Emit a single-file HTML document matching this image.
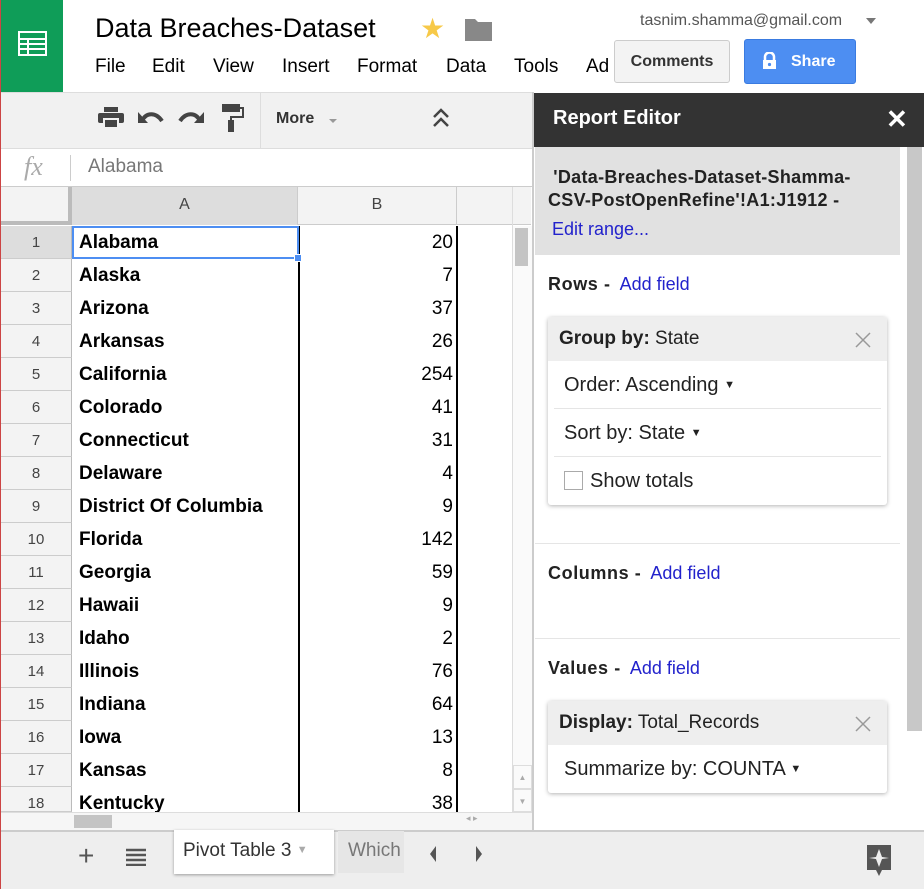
<!DOCTYPE html>
<html><head><style>
*{margin:0;padding:0;box-sizing:border-box}
body{width:924px;height:889px;position:relative;overflow:hidden;background:#fff;font-family:"Liberation Sans",Arial,sans-serif;color:#222}
.a{position:absolute}
.m{position:absolute;top:56px;font-size:19px;color:#000}
.rh{position:absolute;left:1px;width:71px;height:33px;background:#f3f3f3;border-bottom:1px solid #ccc;border-right:1px solid #bbb;text-align:center;font-size:15px;color:#444;line-height:33px}
.ca{position:absolute;left:79px;font-weight:bold;font-size:19px;line-height:33px;color:#000}
.cb{position:absolute;left:300px;width:153px;text-align:right;font-size:19px;line-height:33px;color:#000}
.lnk{color:#2222cc;font-weight:normal;margin-left:9px;letter-spacing:0}
.sec{position:absolute;left:548px;font-weight:bold;font-size:18px;letter-spacing:0.6px}
.card{position:absolute;left:548px;width:339px;background:#fff;border-radius:3px;box-shadow:0 1px 4px rgba(0,0,0,.3)}
.ch{background:#eee;height:44px;padding-left:11px;font-size:19px;line-height:44px;position:relative;border-radius:3px 3px 0 0}
.ch svg{position:absolute;right:16px;top:15px}
.ci{margin:0 6px;border-bottom:1px solid #e5e5e5;height:48px;line-height:48px;font-size:20px;padding-left:10px}
</style></head><body>
<div class="a" style="left:0;top:0;width:1px;height:889px;background:#c44"></div>
<div class="a" style="left:1px;top:0;width:62px;height:92px;background:#0f9d58"></div>
<svg class="a" style="left:18px;top:31px" width="29" height="25" viewBox="0 0 29 25"><rect x="1" y="1" width="27" height="23" fill="none" stroke="#fff" stroke-width="2"/><path d="M1 8H28M1 13H28M1 18H28M10 8V24" stroke="#fff" stroke-width="2"/></svg>
<div class="a" style="left:95px;top:13px;font-size:27px;color:#000">Data Breaches-Dataset</div>
<div class="a" style="left:420px;top:12px;font-size:28px;color:#f7c948">★</div>
<svg class="a" style="left:465px;top:17px" width="27" height="24"><path d="M0 2h10l3 3h14v19H0z" fill="#888"/></svg>
<div class="m" style="left:95px">File</div><div class="m" style="left:152px">Edit</div><div class="m" style="left:213px">View</div><div class="m" style="left:282px">Insert</div><div class="m" style="left:357px">Format</div><div class="m" style="left:446px">Data</div><div class="m" style="left:514px">Tools</div><div class="m" style="left:586px">Ad</div>
<div class="a" style="left:640px;top:12px;font-size:16px;color:#555">tasnim.shamma@gmail.com</div>
<div class="a" style="left:866px;top:18px;width:0;height:0;border:5px solid transparent;border-top:6px solid #777"></div>
<div class="a" style="left:614px;top:40px;width:116px;height:43px;background:#f3f3f3;border:1px solid #ccc;border-radius:3px;font-weight:bold;font-size:16px;line-height:41px;text-align:center;color:#333">Comments</div>
<div class="a" style="left:744px;top:39px;width:112px;height:45px;background:#4d8ef2;border:1px solid #3a7be0;border-radius:3px;color:#fff;font-weight:bold;font-size:16px;line-height:43px;padding-left:46px">Share</div>
<svg class="a" style="left:762px;top:52px" width="15" height="17"><path d="M3 8V5a4.5 4.5 0 019 0v3" fill="none" stroke="#fff" stroke-width="2.5"/><rect x="1" y="8" width="13" height="9" fill="#fff"/><circle cx="7.5" cy="12.5" r="1.6" fill="#4d8ef2"/></svg>
<div class="a" style="left:1px;top:92px;width:532px;height:57px;background:#f1f1f1;border-top:1px solid #ddd;border-bottom:1px solid #ddd"></div>
<div class="a" style="left:260px;top:93px;width:1px;height:55px;background:#ddd"></div>
<svg class="a" style="left:98px;top:107px" width="26" height="22"><rect x="6" y="0" width="14" height="5" fill="#444"/><rect x="0" y="6" width="26" height="10" rx="2" fill="#444"/><rect x="6" y="12" width="14" height="9" fill="#444" stroke="#f1f1f1" stroke-width="2"/></svg>
<svg class="a" style="left:138px;top:109px" width="26" height="16"><path d="M4 12C8 3 18 3 24 12" fill="none" stroke="#444" stroke-width="4"/><path d="M0 3v11h10z" fill="#444"/></svg>
<svg class="a" style="left:178px;top:109px" width="26" height="16"><path d="M22 12C18 3 8 3 2 12" fill="none" stroke="#444" stroke-width="4"/><path d="M26 3v11H16z" fill="#444"/></svg>
<svg class="a" style="left:220px;top:104px" width="26" height="28"><rect x="2" y="0" width="18" height="8" fill="#444"/><path d="M20 4h3v9H11v4" fill="none" stroke="#444" stroke-width="2"/><rect x="8" y="16" width="6" height="12" fill="#444"/></svg>
<div class="a" style="left:276px;top:110px;font-weight:bold;font-size:16px;color:#333">More</div>
<div class="a" style="left:329px;top:119px;border:4px solid transparent;border-top:4px solid #999"></div>
<svg class="a" style="left:432px;top:108px" width="18" height="20"><path d="M2 9l7-7 7 7M2 18l7-7 7 7" fill="none" stroke="#444" stroke-width="2.5"/></svg>
<div class="a" style="left:1px;top:149px;width:532px;height:38px;background:#fff;border-bottom:1px solid #ccc"></div>
<div class="a" style="left:24px;top:152px;font-family:'Liberation Serif',serif;font-style:italic;font-size:26px;color:#aaa">fx</div>
<div class="a" style="left:70px;top:155px;width:1px;height:26px;background:#ccc"></div>
<div class="a" style="left:88px;top:156px;font-size:19px;color:#777">Alabama</div>
<div class="a" style="left:1px;top:187px;width:530px;height:38px;background:#f3f3f3;border-bottom:1px solid #ccc"></div>
<div class="a" style="left:1px;top:187px;width:71px;height:38px;background:#f3f3f3;border-right:4px solid #bbb;border-bottom:4px solid #bbb"></div>
<div class="a" style="left:72px;top:187px;width:226px;height:38px;background:#ddd;border-right:1px solid #ccc;text-align:center;line-height:36px;font-size:16px;color:#444">A</div>
<div class="a" style="left:298px;top:187px;width:159px;height:38px;border-right:1px solid #ccc;text-align:center;line-height:36px;font-size:16px;color:#444">B</div>
<div class="a" style="left:512px;top:187px;width:1px;height:643px;background:#ddd"></div>
<div class="rh" style="top:226px;background:#ddd">1</div>
<div class="rh" style="top:259px">2</div><div class="rh" style="top:292px">3</div><div class="rh" style="top:325px">4</div><div class="rh" style="top:358px">5</div><div class="rh" style="top:391px">6</div><div class="rh" style="top:424px">7</div><div class="rh" style="top:457px">8</div><div class="rh" style="top:490px">9</div><div class="rh" style="top:523px">10</div><div class="rh" style="top:556px">11</div><div class="rh" style="top:589px">12</div><div class="rh" style="top:622px">13</div><div class="rh" style="top:655px">14</div><div class="rh" style="top:688px">15</div><div class="rh" style="top:721px">16</div><div class="rh" style="top:754px">17</div><div class="rh" style="top:787px;height:25px">18</div>
<div class="a" style="left:298px;top:226px;width:2px;height:586px;background:#000"></div>
<div class="a" style="left:456px;top:226px;width:2px;height:586px;background:#000"></div>
<div class="a" style="left:72px;top:226px;width:227px;height:33px;border:2px solid #4d8ef2"></div>
<div class="a" style="left:294px;top:254px;width:8px;height:8px;background:#4d8ef2;border:1px solid #fff"></div>
<div class="a" style="left:0;top:226px;width:512px;height:586px;overflow:hidden">
<div style="position:relative;top:0;left:0">
<div class="ca" style="top:0">Alabama</div><div class="cb" style="top:0">20</div>
<div class="ca" style="top:33px">Alaska</div><div class="cb" style="top:33px">7</div>
<div class="ca" style="top:66px">Arizona</div><div class="cb" style="top:66px">37</div>
<div class="ca" style="top:99px">Arkansas</div><div class="cb" style="top:99px">26</div>
<div class="ca" style="top:132px">California</div><div class="cb" style="top:132px">254</div>
<div class="ca" style="top:165px">Colorado</div><div class="cb" style="top:165px">41</div>
<div class="ca" style="top:198px">Connecticut</div><div class="cb" style="top:198px">31</div>
<div class="ca" style="top:231px">Delaware</div><div class="cb" style="top:231px">4</div>
<div class="ca" style="top:264px">District Of Columbia</div><div class="cb" style="top:264px">9</div>
<div class="ca" style="top:297px">Florida</div><div class="cb" style="top:297px">142</div>
<div class="ca" style="top:330px">Georgia</div><div class="cb" style="top:330px">59</div>
<div class="ca" style="top:363px">Hawaii</div><div class="cb" style="top:363px">9</div>
<div class="ca" style="top:396px">Idaho</div><div class="cb" style="top:396px">2</div>
<div class="ca" style="top:429px">Illinois</div><div class="cb" style="top:429px">76</div>
<div class="ca" style="top:462px">Indiana</div><div class="cb" style="top:462px">64</div>
<div class="ca" style="top:495px">Iowa</div><div class="cb" style="top:495px">13</div>
<div class="ca" style="top:528px">Kansas</div><div class="cb" style="top:528px">8</div>
<div class="ca" style="top:561px">Kentucky</div><div class="cb" style="top:561px">38</div>
</div></div>
<div class="a" style="left:512px;top:226px;width:20px;height:586px;background:#fafafa;border-left:1px solid #ddd"></div>
<div class="a" style="left:515px;top:228px;width:13px;height:38px;background:#c4c4c4"></div>
<div class="a" style="left:513px;top:765px;width:19px;height:24px;border:1px solid #ddd;font-size:8px;color:#aaa;text-align:center;line-height:24px">▲</div>
<div class="a" style="left:513px;top:789px;width:19px;height:23px;border:1px solid #ddd;font-size:8px;color:#aaa;text-align:center;line-height:23px">▼</div>
<div class="a" style="left:1px;top:812px;width:531px;height:18px;background:#f6f6f6;border-top:1px solid #ddd"></div>
<div class="a" style="left:74px;top:815px;width:38px;height:13px;background:#c4c4c4"></div>
<div class="a" style="left:466px;top:813px;font-size:9px;color:#aaa">◂ ▸</div>
<div class="a" style="left:1px;top:830px;width:923px;height:59px;background:#eee;border-top:2px solid #ccc"></div>
<div class="a" style="left:78px;top:840px;font-size:28px;color:#555">+</div>
<svg class="a" style="left:126px;top:848px" width="20" height="18"><path d="M0 2h20M0 7h20M0 12h20M0 17h20" stroke="#555" stroke-width="2.5"/></svg>
<div class="a" style="left:174px;top:830px;width:160px;height:44px;background:#fff;box-shadow:0 1px 3px rgba(0,0,0,.35);font-size:19px;line-height:40px;padding-left:9px;color:#333">Pivot Table 3 <span style="font-size:11px;color:#aaa;vertical-align:3px">▼</span></div>
<div class="a" style="left:338px;top:831px;width:66px;height:42px;background:#e6e6e6;overflow:hidden;font-size:19px;line-height:40px;padding-left:10px;color:#777">Which</div>
<svg class="a" style="left:426px;top:845px" width="60" height="18"><path d="M10 1L4 9l6 8zM50 1l6 8-6 8z" fill="#555"/></svg>
<svg class="a" style="left:865px;top:845px" width="28" height="32"><path d="M2 0h24v25H17l-3 6-3-6H2z" fill="#555"/><path d="M14 4l3 8 7 1-7 1-3 8-3-8-7-1 7-1z" fill="#eee"/></svg>
<div class="a" style="left:532px;top:92px;width:2px;height:738px;background:#ccc"></div>
<div class="a" style="left:534px;top:93px;width:390px;height:54px;background:#333"></div>
<div class="a" style="left:553px;top:107px;color:#fff;font-weight:bold;font-size:20px">Report Editor</div>
<div class="a" style="left:886px;top:104px;color:#fff;font-weight:bold;font-size:26px">✕</div>
<div class="a" style="left:535px;top:147px;width:365px;height:108px;background:#e1e1e1"></div>
<div class="a" style="left:548px;top:166px;font-weight:bold;font-size:18px;line-height:23px;color:#222;letter-spacing:0.3px">&nbsp;'Data-Breaches-Dataset-Shamma-<br>CSV-PostOpenRefine'!A1:J1912 -</div>
<div class="a" style="left:552px;top:219px;font-size:18px;color:#2222cc">Edit range...</div>
<div class="a" style="left:907px;top:147px;width:15px;height:584px;background:#c8c8c8"></div>
<div class="sec" style="top:274px">Rows -<span class="lnk">Add field</span></div>
<div class="card" style="top:317px">
<div class="ch"><b>Group by:</b> State<svg width="16" height="16"><path d="M1 1L15 15M15 1L1 15" stroke="#999" stroke-width="1.5"/></svg></div>
<div class="ci">Order: Ascending <span style="font-size:11px;vertical-align:3px">▼</span></div>
<div class="ci">Sort by: State <span style="font-size:11px;vertical-align:3px">▼</span></div>
<div class="ci" style="border:none"><span style="display:inline-block;width:19px;height:19px;border:1px solid #aaa;vertical-align:-3px;margin-right:7px"></span>Show totals</div>
</div>
<div class="a" style="left:535px;top:543px;width:365px;height:1px;background:#e5e5e5"></div>
<div class="sec" style="top:563px">Columns -<span class="lnk">Add field</span></div>
<div class="a" style="left:535px;top:638px;width:365px;height:1px;background:#e5e5e5"></div>
<div class="sec" style="top:658px">Values -<span class="lnk">Add field</span></div>
<div class="card" style="top:701px">
<div class="ch"><b>Display:</b> Total_Records<svg width="16" height="16"><path d="M1 1L15 15M15 1L1 15" stroke="#999" stroke-width="1.5"/></svg></div>
<div class="ci" style="border:none">Summarize by: COUNTA <span style="font-size:11px;vertical-align:3px">▼</span></div>
</div>
</body></html>
